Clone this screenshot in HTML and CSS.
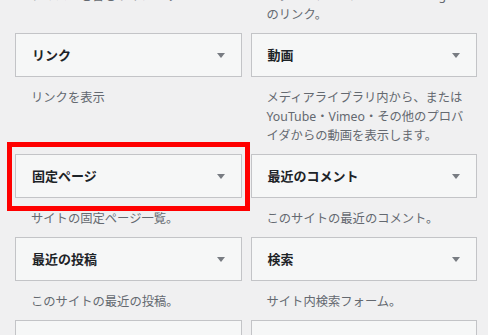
FILE: index.html
```html
<!DOCTYPE html>
<html lang="ja">
<head>
    <meta charset="UTF-8">
    <meta name="viewport" content="width=device-width, initial-scale=1.0">
    <title>利用できるウィジェット</title>
    <link rel="stylesheet" href="styles.css">
</head>
<body>
    <div class="widget-list">
        <div class="widget">
            <div class="widget-top"><h3>テキスト</h3><span class="toggle"></span></div>
            <div class="widget-description">テキストを含むウィジェット</div>
        </div>
        <div class="widget">
            <div class="widget-top"><h3>メタ情報</h3><span class="toggle"></span></div>
            <div class="widget-description">ログイン、RSS、WordPress.org へ<br>のリンク。</div>
        </div>

        <div class="widget">
            <div class="widget-top"><h3>リンク</h3><span class="toggle"></span></div>
            <div class="widget-description">リンクを表示</div>
        </div>
        <div class="widget">
            <div class="widget-top"><h3>動画</h3><span class="toggle"></span></div>
            <div class="widget-description">メディアライブラリ内から、または<br>YouTube・Vimeo・その他のプロバ<br>イダからの動画を表示します。</div>
        </div>

        <div class="widget highlighted">
            <div class="widget-top"><h3>固定ページ</h3><span class="toggle"></span></div>
            <div class="widget-description">サイトの固定ページ一覧。</div>
        </div>
        <div class="widget">
            <div class="widget-top"><h3>最近のコメント</h3><span class="toggle"></span></div>
            <div class="widget-description">このサイトの最近のコメント。</div>
        </div>

        <div class="widget">
            <div class="widget-top"><h3>最近の投稿</h3><span class="toggle"></span></div>
            <div class="widget-description">このサイトの最近の投稿。</div>
        </div>
        <div class="widget">
            <div class="widget-top"><h3>検索</h3><span class="toggle"></span></div>
            <div class="widget-description">サイト内検索フォーム。</div>
        </div>

        <div class="widget">
            <div class="widget-top"><h3>画像</h3><span class="toggle"></span></div>
            <div class="widget-description">画像を表示します。</div>
        </div>
        <div class="widget">
            <div class="widget-top"><h3>音声</h3><span class="toggle"></span></div>
            <div class="widget-description">音声プレーヤーを表示します。</div>
        </div>
    </div>
</body>
</html>
```

FILE: styles.css
```css
html, body {
    margin: 0;
    padding: 0;
    background-color: #f0f0f1;
    overflow: hidden;
}
body {
    font-family: "Noto Sans", "Noto Sans CJK JP", sans-serif;
    color: #1d2327;
}
.widget-list {
    display: grid;
    grid-template-columns: 1fr 1fr;
    column-gap: 9px;
    padding: 0 11px 0 15px;
    margin-top: -69px;
}
.widget {
    position: relative;
    display: flex;
    flex-direction: column;
}
.widget-top {
    box-sizing: border-box;
    height: 44px;
    display: flex;
    align-items: center;
    justify-content: space-between;
    padding: 0 16px;
    background-color: #f6f7f7;
    border: 1px solid #c3c4c7;
}
.widget-top h3 {
    margin: 0;
    font-size: 13px;
    font-weight: bold;
    line-height: 19px;
    color: #1d2327;
}
.toggle {
    width: 0;
    height: 0;
    border-left: 4.5px solid transparent;
    border-right: 4.5px solid transparent;
    border-top: 5px solid #787c82;
    margin-top: 1px;
}
.widget-description {
    padding: 11px 2px 9px 16px;
    font-size: 12.3px;
    line-height: 19px;
    color: #646970;
}
.highlighted::after {
    content: "";
    position: absolute;
    top: -12px;
    left: -8px;
    width: 243px;
    height: 69px;
    box-sizing: border-box;
    border: 5px solid #ff0000;
}
```
